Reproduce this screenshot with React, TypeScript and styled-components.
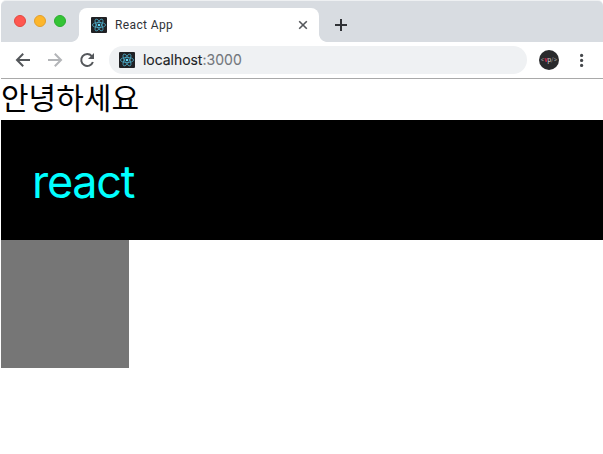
import React from 'react';
import styled, { createGlobalStyle } from 'styled-components';

const GlobalStyle = createGlobalStyle`
  * { box-sizing: border-box; }
  body { margin: 0; background: #fff; overflow: hidden; }
`;

const BrowserWindow = styled.div`
  height: 454px;
  padding: 1px 0 0 1px;
  background: #fff;
  font-family: Roboto, "Liberation Sans", sans-serif;
`;

const TabStrip = styled.header`
  display: flex;
  height: 41px;
  padding-left: 13px;
  background: #d8dce1;
  border-radius: 5px 5px 0 0;
  box-shadow: 0 -1px 0 #eef0f2;
`;

const TrafficLights = styled.div`
  display: flex;
  gap: 8px;
  width: 65px;
  padding-top: 14px;
`;

const Light = styled.span<{ $fill: string; $edge: string }>`
  width: 12px;
  height: 12px;
  border-radius: 50%;
  background: ${({ $fill }) => $fill};
  border: 1px solid ${({ $edge }) => $edge};
`;

const Tab = styled.div`
  position: relative;
  display: flex;
  align-items: center;
  width: 240px;
  height: 34px;
  margin-top: 7px;
  padding: 0 11px 0 12px;
  background: #fff;
  border-radius: 8px 8px 0 0;

  &::before,
  &::after {
    content: '';
    position: absolute;
    bottom: 0;
    width: 8px;
    height: 8px;
  }
  &::before {
    right: 100%;
    background: radial-gradient(circle at 0 0, transparent 7.5px, #fff 8.2px);
  }
  &::after {
    left: 100%;
    background: radial-gradient(circle at 100% 0, transparent 7.5px, #fff 8.2px);
  }
`;

const TabTitle = styled.span`
  flex: 1;
  margin-left: 8px;
  font-size: 12px;
  line-height: 16px;
  letter-spacing: 0.38px;
  color: #303338;
`;

const NewTab = styled.div`
  display: flex;
  align-items: center;
  height: 34px;
  margin: 7px 0 0 15px;
`;

const Toolbar = styled.nav`
  display: flex;
  align-items: center;
  height: 37px;
  padding-left: 14px;
  border-bottom: 1px solid #a9a9a9;
`;

const NavButtons = styled.div`
  display: flex;
  gap: 16px;
  width: 94px;
`;

const AddressBar = styled.div`
  display: flex;
  align-items: center;
  width: 418px;
  height: 28px;
  padding-left: 10px;
  border-radius: 14px;
  background: #eff1f3;
`;

const Address = styled.span`
  margin-left: 8px;
  font-family: Inter, sans-serif;
  font-size: 14px;
  line-height: 18px;
  letter-spacing: -0.05px;
  color: #202124;
  -webkit-text-stroke: 0.1px #202124;
`;

const Port = styled.span`
  letter-spacing: 0.05px;
  color: #73777c;
  -webkit-text-stroke: 0.1px #73777c;
`;

const Avatar = styled.div`
  display: flex;
  align-items: center;
  justify-content: center;
  width: 20px;
  height: 20px;
  margin: 0 21px 0 12px;
  border-radius: 50%;
  background: #292a2c;
  color: #929296;
  font-size: 6.5px;
  line-height: 20px;
`;

const AvatarAccent = styled.b`
  color: #d02648;
`;

const AvatarStrong = styled.span`
  color: #d4d4d6;
`;

const Greeting = styled.div`
  height: 41px;
  font-family: "Noto Sans CJK KR", sans-serif;
  font-size: 30px;
  line-height: 35px;
  color: #000;
`;

const Banner = styled.div`
  height: 120px;
  padding: 32px;
  background: #000;
  color: #0ff;
  font-family: Inter, sans-serif;
  font-size: 45px;
  line-height: 60px;
  letter-spacing: -1.3px;
  text-indent: -1px;
`;

const Box = styled.div`
  width: 128px;
  height: 128px;
  background: #767676;
`;

const StrokeIcon = styled.svg<{ $color: string }>`
  display: block;
  fill: none;
  stroke: ${({ $color }) => $color};
  stroke-width: 2;
`;

const ReactIcon = () => (
  <svg width="16" height="16" viewBox="0 0 16 16">
    <rect width="16" height="16" rx="1" fill="#202124" />
    <g fill="none" stroke="#4ba9c5" strokeWidth="0.8">
      <ellipse cx="8" cy="8" rx="6.6" ry="2.55" />
      <ellipse cx="8" cy="8" rx="6.6" ry="2.55" transform="rotate(60 8 8)" />
      <ellipse cx="8" cy="8" rx="6.6" ry="2.55" transform="rotate(120 8 8)" />
    </g>
    <circle cx="8" cy="8" r="1.3" fill="#61dafb" />
  </svg>
);

const BackIcon = () => (
  <StrokeIcon $color="#54575b" width="16" height="16" viewBox="0 0 16 16">
    <path d="M15 8H2.2M8.2 1.8L2 8l6.2 6.2" />
  </StrokeIcon>
);

const ForwardIcon = () => (
  <StrokeIcon $color="#b3b5b8" width="16" height="16" viewBox="0 0 16 16">
    <path d="M1 8h12.8M7.8 1.8L14 8l-6.2 6.2" />
  </StrokeIcon>
);

const ReloadIcon = () => (
  <svg width="16" height="16" viewBox="0 0 16 16">
    <path d="M12.8 4.1A6 6 0 1 0 13.9 10" fill="none" stroke="#54575b" strokeWidth="2" />
    <path d="M15 1v6H9z" fill="#54575b" />
  </svg>
);

const App: React.FC = () => (
  <>
    <GlobalStyle />
    <BrowserWindow>
      <TabStrip>
        <TrafficLights>
          <Light $fill="#ff5750" $edge="#e2483f" />
          <Light $fill="#fdb62b" $edge="#e29f2b" />
          <Light $fill="#34c435" $edge="#2bad30" />
        </TrafficLights>
        <Tab>
          <ReactIcon />
          <TabTitle>React App</TabTitle>
          <StrokeIcon $color="#54575b" width="10" height="10" viewBox="0 0 10 10">
            <path d="M1.2 1.2l7.6 7.6M8.8 1.2L1.2 8.8" strokeWidth="1.6" />
          </StrokeIcon>
        </Tab>
        <NewTab>
          <StrokeIcon $color="#303236" width="14" height="14" viewBox="0 0 14 14">
            <path d="M7 1v12M1 7h12" />
          </StrokeIcon>
        </NewTab>
      </TabStrip>
      <Toolbar>
        <NavButtons>
          <BackIcon />
          <ForwardIcon />
          <ReloadIcon />
        </NavButtons>
        <AddressBar>
          <ReactIcon />
          <Address>
            localhost<Port>:3000</Port>
          </Address>
        </AddressBar>
        <Avatar>
          &lt;<AvatarAccent>v</AvatarAccent><AvatarStrong>p</AvatarStrong>/&gt;
        </Avatar>
        <svg width="4" height="16" viewBox="0 0 4 16" fill="#44474b">
          <circle cx="1.6" cy="3.4" r="1.6" />
          <circle cx="1.6" cy="8.4" r="1.6" />
          <circle cx="1.6" cy="13.4" r="1.6" />
        </svg>
      </Toolbar>
      <Greeting>안녕하세요</Greeting>
      <Banner>react</Banner>
      <Box />
    </BrowserWindow>
  </>
);

export default App;
